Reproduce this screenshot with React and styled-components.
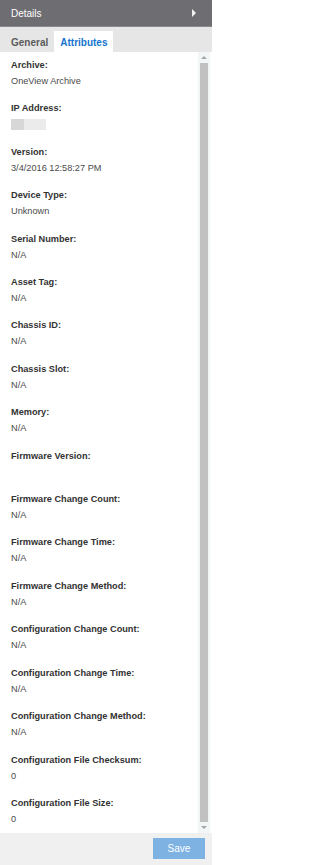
import React from 'react'
import styled, { createGlobalStyle } from "styled-components";

const GlobalStyle = createGlobalStyle`
  html, body {
    margin: 0;
    padding: 0;
    background: #fff;
  }
  body {
    font-family: "Liberation Sans", Arial, sans-serif;
  }
`;

const Panel = styled.div`
  width: 212px;
  height: 865px;
  display: flex;
  flex-direction: column;
  background: #fff;
  overflow: hidden;
`;

const Header = styled.div`
  height: 26px;
  flex-shrink: 0;
  background: #6e6d71;
  color: #fff;
  font-size: 10px;
  display: flex;
  align-items: center;
  justify-content: space-between;
  padding: 0 16px 0 11px;
  border-bottom: 1px solid #8a898c;
`;

const Arrow = styled.span`
  width: 0;
  height: 0;
  border-top: 4px solid transparent;
  border-bottom: 4px solid transparent;
  border-left: 4px solid #f2f2f2;
`;

const Tabs = styled.div`
  height: 25px;
  flex-shrink: 0;
  background: #e6e6e6;
  display: flex;
  align-items: flex-end;
  padding-left: 5px;
`;

const Tab = styled.div`
  height: 21px;
  padding: 0 6px;
  font-size: 10px;
  font-weight: bold;
  line-height: 23px;
  color: ${(props) => (props.$active ? "#1574cf" : "#5b5b5b")};
  background: ${(props) => (props.$active ? "#fff" : "transparent")};
`;

const Body = styled.div`
  flex: 1;
  display: flex;
  min-height: 0;
`;

const Content = styled.div`
  flex: 1;
  padding: 6px 0 0 11px;
  overflow: hidden;
`;

const Item = styled.div`
  height: 43.41px;
`;

const Label = styled.div`
  font-size: 9.2px;
  font-weight: bold;
  color: #333;
  line-height: 15px;
`;

const Value = styled.div`
  font-size: 9.2px;
  color: #4a4a4a;
  line-height: 16px;
  min-height: 16px;
`;

const Masked = styled.div`
  display: flex;
  width: 35px;
  height: 11px;
  margin-top: 3px;
  background: #ebebeb;

  &::before {
    content: "";
    width: 13px;
    background: #d7d7d7;
  }
`;

const ScrollTrack = styled.div`
  width: 12px;
  margin-right: 2px;
  background: #f3f6f6;
  display: flex;
  flex-direction: column;
  align-items: center;
`;

const ScrollArrow = styled.div`
  height: 11px;
  display: flex;
  align-items: center;
  justify-content: center;

  &::after {
    content: "";
    width: 0;
    height: 0;
    border-left: 3px solid transparent;
    border-right: 3px solid transparent;
    ${(props) =>
      props.$down
        ? `border-top: 3px solid #a6a6a6;`
        : `border-bottom: 3px solid #a6a6a6;`}
  }
`;

const Thumb = styled.div`
  flex: 1;
  width: 8px;
  background: #c1c1c1;
`;

const Footer = styled.div`
  height: 32px;
  flex-shrink: 0;
  background: #f0f0f0;
  display: flex;
  justify-content: flex-end;
  align-items: flex-start;
  padding: 5px 7px 0 0;
  box-sizing: border-box;
`;

const SaveButton = styled.button`
  width: 52px;
  height: 21px;
  border: none;
  background: #7db2e2;
  color: #fff;
  font-family: "Liberation Sans", Arial, sans-serif;
  font-size: 10px;
  padding: 0;
`;

const attributes = [
  ["Archive:", "OneView Archive"],
  ["IP Address:", null],
  ["Version:", "3/4/2016 12:58:27 PM"],
  ["Device Type:", "Unknown"],
  ["Serial Number:", "N/A"],
  ["Asset Tag:", "N/A"],
  ["Chassis ID:", "N/A"],
  ["Chassis Slot:", "N/A"],
  ["Memory:", "N/A"],
  ["Firmware Version:", ""],
  ["Firmware Change Count:", "N/A"],
  ["Firmware Change Time:", "N/A"],
  ["Firmware Change Method:", "N/A"],
  ["Configuration Change Count:", "N/A"],
  ["Configuration Change Time:", "N/A"],
  ["Configuration Change Method:", "N/A"],
  ["Configuration File Checksum:", "0"],
  ["Configuration File Size:", "0"],
];

export default function App() {
  return (
    <>
      <GlobalStyle />
      <Panel>
        <Header>
          <span>Details</span>
          <Arrow />
        </Header>
        <Tabs>
          <Tab>General</Tab>
          <Tab $active>Attributes</Tab>
        </Tabs>
        <Body>
          <Content>
            {attributes.map(([label, value]) => (
              <Item key={label}>
                <Label>{label}</Label>
                {value === null ? <Masked /> : <Value>{value}</Value>}
              </Item>
            ))}
          </Content>
          <ScrollTrack>
            <ScrollArrow />
            <Thumb />
            <ScrollArrow $down />
          </ScrollTrack>
        </Body>
        <Footer>
          <SaveButton>Save</SaveButton>
        </Footer>
      </Panel>
    </>
  );
}
